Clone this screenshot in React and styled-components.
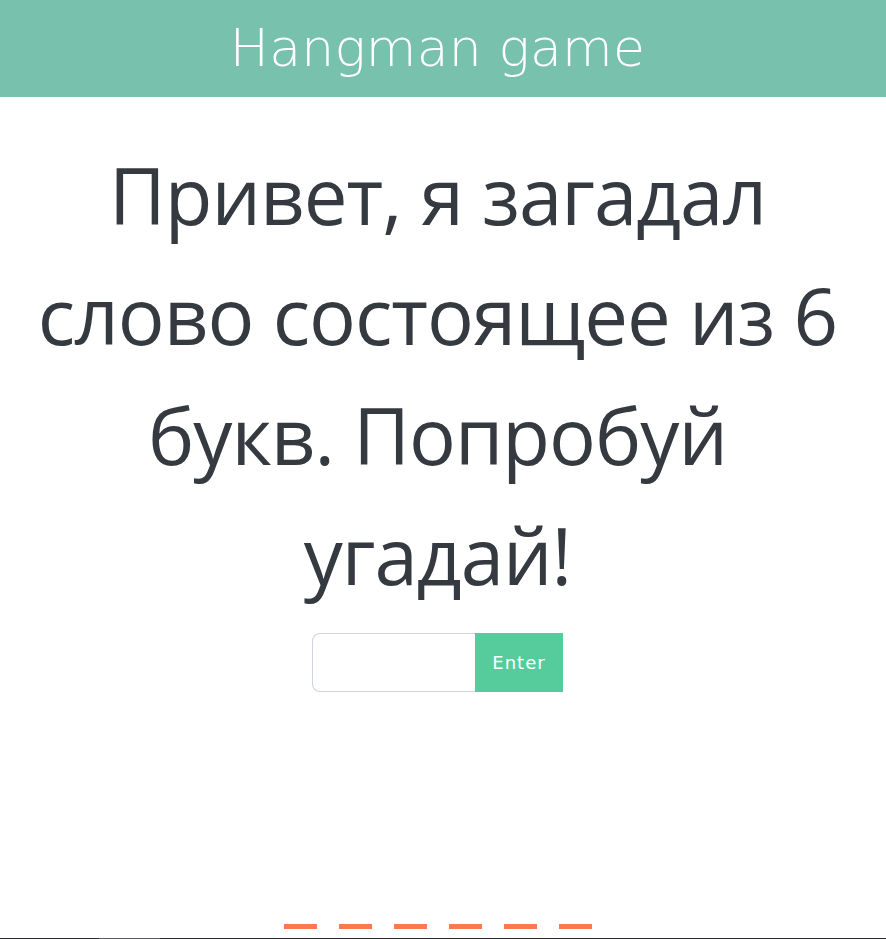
import React from 'react'
import styled, { createGlobalStyle } from 'styled-components'

const GlobalStyle = createGlobalStyle`
  * { box-sizing: border-box; }
  html, body {
    margin: 0;
    padding: 0;
    background: #fff;
    font-family: 'Open Sans', 'Noto Sans', sans-serif;
    overflow: hidden;
  }
`

const Page = styled.div`
  height: 939px;
  display: flex;
  flex-direction: column;
`

const Header = styled.header`
  height: 97px;
  padding-right: 11px;
  background: #78c2ad;
  display: flex;
  align-items: center;
  justify-content: center;
`

const Title = styled.h1`
  margin: 0 0 2px;
  color: #fff;
  font-family: 'DejaVu Sans', 'Lato', sans-serif;
  font-weight: 200;
  font-size: 52px;
  letter-spacing: 0.2px;
`

const Main = styled.main`
  flex: 1;
  display: flex;
  flex-direction: column;
  align-items: center;
  padding: 38px 11px 0 0;
`

const Question = styled.h2`
  margin: 0;
  text-align: center;
  color: #343a40;
  font-weight: 400;
  font-size: 78px;
  letter-spacing: -1px;
  line-height: 120px;
`

const Line = styled.span`
  display: block;
  white-space: nowrap;
`

const Form = styled.form`
  display: flex;
  margin-top: 18px;
  height: 59px;
`

const Input = styled.input`
  width: 163px;
  border: 1px solid #ced4da;
  border-right: none;
  border-radius: 8px 0 0 8px;
  outline: none;
  font-size: 18px;
  padding: 0 12px;
`

const Button = styled.button`
  width: 88px;
  border: none;
  background: #56cc9d;
  color: #fff;
  font-family: 'DejaVu Sans', 'Lato', sans-serif;
  font-weight: 400;
  font-size: 18px;
  letter-spacing: 1px;
`

const Dashes = styled.div`
  margin-top: auto;
  margin-bottom: 9px;
  display: flex;
  gap: 22px;
`

const Dash = styled.span`
  width: 33px;
  height: 5px;
  background: #ff7851;
`

const BottomBar = styled.div`
  height: 1px;
  background: #2b2b2f;
  display: flex;
`

const Thumb = styled.span`
  margin-left: 99px;
  width: 61px;
  background: #5a5a5e;
`

export default function App() {
  return (
    <Page>
      <GlobalStyle />
      <Header>
        <Title>Hangman game</Title>
      </Header>
      <Main>
        <Question>
          <Line>Привет, я загадал</Line>
          <Line>слово состоящее из 6</Line>
          <Line>букв. Попробуй</Line>
          <Line>угадай!</Line>
        </Question>
        <Form onSubmit={e => e.preventDefault()}>
          <Input type='text' />
          <Button type='submit'>Enter</Button>
        </Form>
        <Dashes>
          {[0, 1, 2, 3, 4, 5].map(i => <Dash key={i} />)}
        </Dashes>
      </Main>
      <BottomBar>
        <Thumb />
      </BottomBar>
    </Page>
  )
}
